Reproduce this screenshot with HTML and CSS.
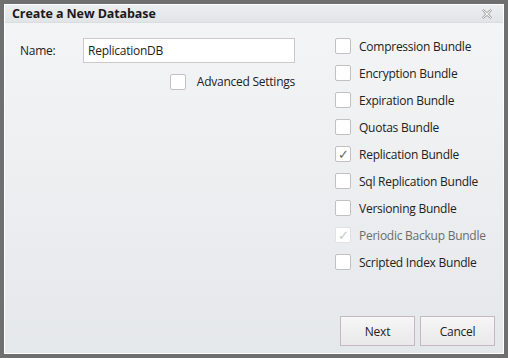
FILE: index.html
```html
<!DOCTYPE html>
<html>
<head>
<meta charset="utf-8">
<link rel="stylesheet" href="styles.css">
</head>
<body>
<div class="dialog">
  <div class="inner">
    <div class="titlebar">
      <span class="title">Create a New Database</span>
      <svg class="close" width="10" height="10" viewBox="0 0 10 10">
        <path d="M0.5 1.5 L1.5 0.5 L5 3.5 L8.5 0.5 L9.5 1.5 L6.5 5 L9.5 8.5 L8.5 9.5 L5 6.5 L1.5 9.5 L0.5 8.5 L3.5 5 Z" fill="#f0f0f0" stroke="#9c9c9c" stroke-width="1"/>
      </svg>
    </div>
    <div class="content">
      <div class="left">
        <div class="name-row">
          <label class="name-label">Name:</label>
          <div class="input">ReplicationDB</div>
        </div>
        <div class="adv-row">
          <span class="box"></span>
          <span class="lbl">Advanced Settings</span>
        </div>
      </div>
      <div class="right">
        <div class="item"><span class="box"></span><span class="lbl">Compression Bundle</span></div>
        <div class="item"><span class="box"></span><span class="lbl">Encryption Bundle</span></div>
        <div class="item"><span class="box"></span><span class="lbl">Expiration Bundle</span></div>
        <div class="item"><span class="box"></span><span class="lbl">Quotas Bundle</span></div>
        <div class="item"><span class="box checked">&#10003;</span><span class="lbl">Replication Bundle</span></div>
        <div class="item"><span class="box"></span><span class="lbl">Sql Replication Bundle</span></div>
        <div class="item"><span class="box"></span><span class="lbl">Versioning Bundle</span></div>
        <div class="item disabled"><span class="box checked">&#10003;</span><span class="lbl">Periodic Backup Bundle</span></div>
        <div class="item"><span class="box"></span><span class="lbl">Scripted Index Bundle</span></div>
      </div>
    </div>
    <div class="footer">
      <button class="btn">Next</button>
      <button class="btn">Cancel</button>
    </div>
  </div>
</div>
</body>
</html>
```
FILE: styles.css
```css
html, body {
  margin: 0;
  padding: 0;
}
body {
  font-family: "Open Sans", "Noto Sans", sans-serif;
  font-size: 12px;
  letter-spacing: -0.25px;
  color: #222;
}
.dialog {
  width: 508px;
  height: 358px;
  box-sizing: border-box;
  border: 4px solid #6f6f6f;
}
.inner {
  height: 100%;
  box-sizing: border-box;
  border: 1px solid #ffffff;
  background: linear-gradient(#f4f5f6, #e5e8eb);
  display: flex;
  flex-direction: column;
}
.titlebar {
  height: 17px;
  background: linear-gradient(#ebedef, #e2e5e8);
  border-bottom: 1px solid #dadcdf;
  display: flex;
  align-items: center;
  justify-content: space-between;
  padding: 0 11px 0 7px;
}
.title {
  font-weight: bold;
  font-size: 12.5px;
  letter-spacing: -0.1px;
  color: #1a1a1a;
}
.close {
  display: block;
}
.content {
  flex: 1;
  display: flex;
  padding: 15px 0 0 15px;
}
.left {
  width: 275px;
  display: flex;
  flex-direction: column;
}
.name-row {
  display: flex;
  align-items: center;
}
.name-label {
  width: 63px;
}
.input {
  width: 212px;
  height: 25px;
  box-sizing: border-box;
  border: 1px solid #cdc9cb;
  background: #fff;
  padding-left: 4px;
  line-height: 23px;
}
.adv-row {
  display: flex;
  justify-content: flex-end;
  align-items: center;
  margin-top: 10px;
}
.box {
  width: 16px;
  height: 16px;
  box-sizing: border-box;
  border: 1px solid #c2c0c2;
  border-radius: 2px;
  background: #fff;
  display: flex;
  align-items: center;
  justify-content: center;
  font-size: 13px;
  line-height: 1;
  color: #666;
  flex-shrink: 0;
  letter-spacing: 0;
}
.adv-row .lbl {
  margin-left: 11px;
}
.right {
  margin-left: 40px;
  display: flex;
  flex-direction: column;
  gap: 11px;
}
.item {
  display: flex;
  align-items: center;
  height: 16px;
}
.item .lbl {
  margin-left: 8px;
}
.item.disabled .lbl {
  color: #6c6c6c;
}
.item.disabled .box {
  border-color: #e2e2e2;
  color: #c8c8c8;
}
.footer {
  display: flex;
  justify-content: flex-end;
  gap: 5px;
  padding: 0 8px 7px 0;
}
.btn {
  width: 75px;
  height: 30px;
  border: 1px solid #c5b9c1;
  background: linear-gradient(#f6f6f6, #e9e9e9);
  font-family: "Open Sans", "Noto Sans", sans-serif;
  font-size: 12px;
  letter-spacing: -0.25px;
  color: #222;
  padding: 0;
}
```
